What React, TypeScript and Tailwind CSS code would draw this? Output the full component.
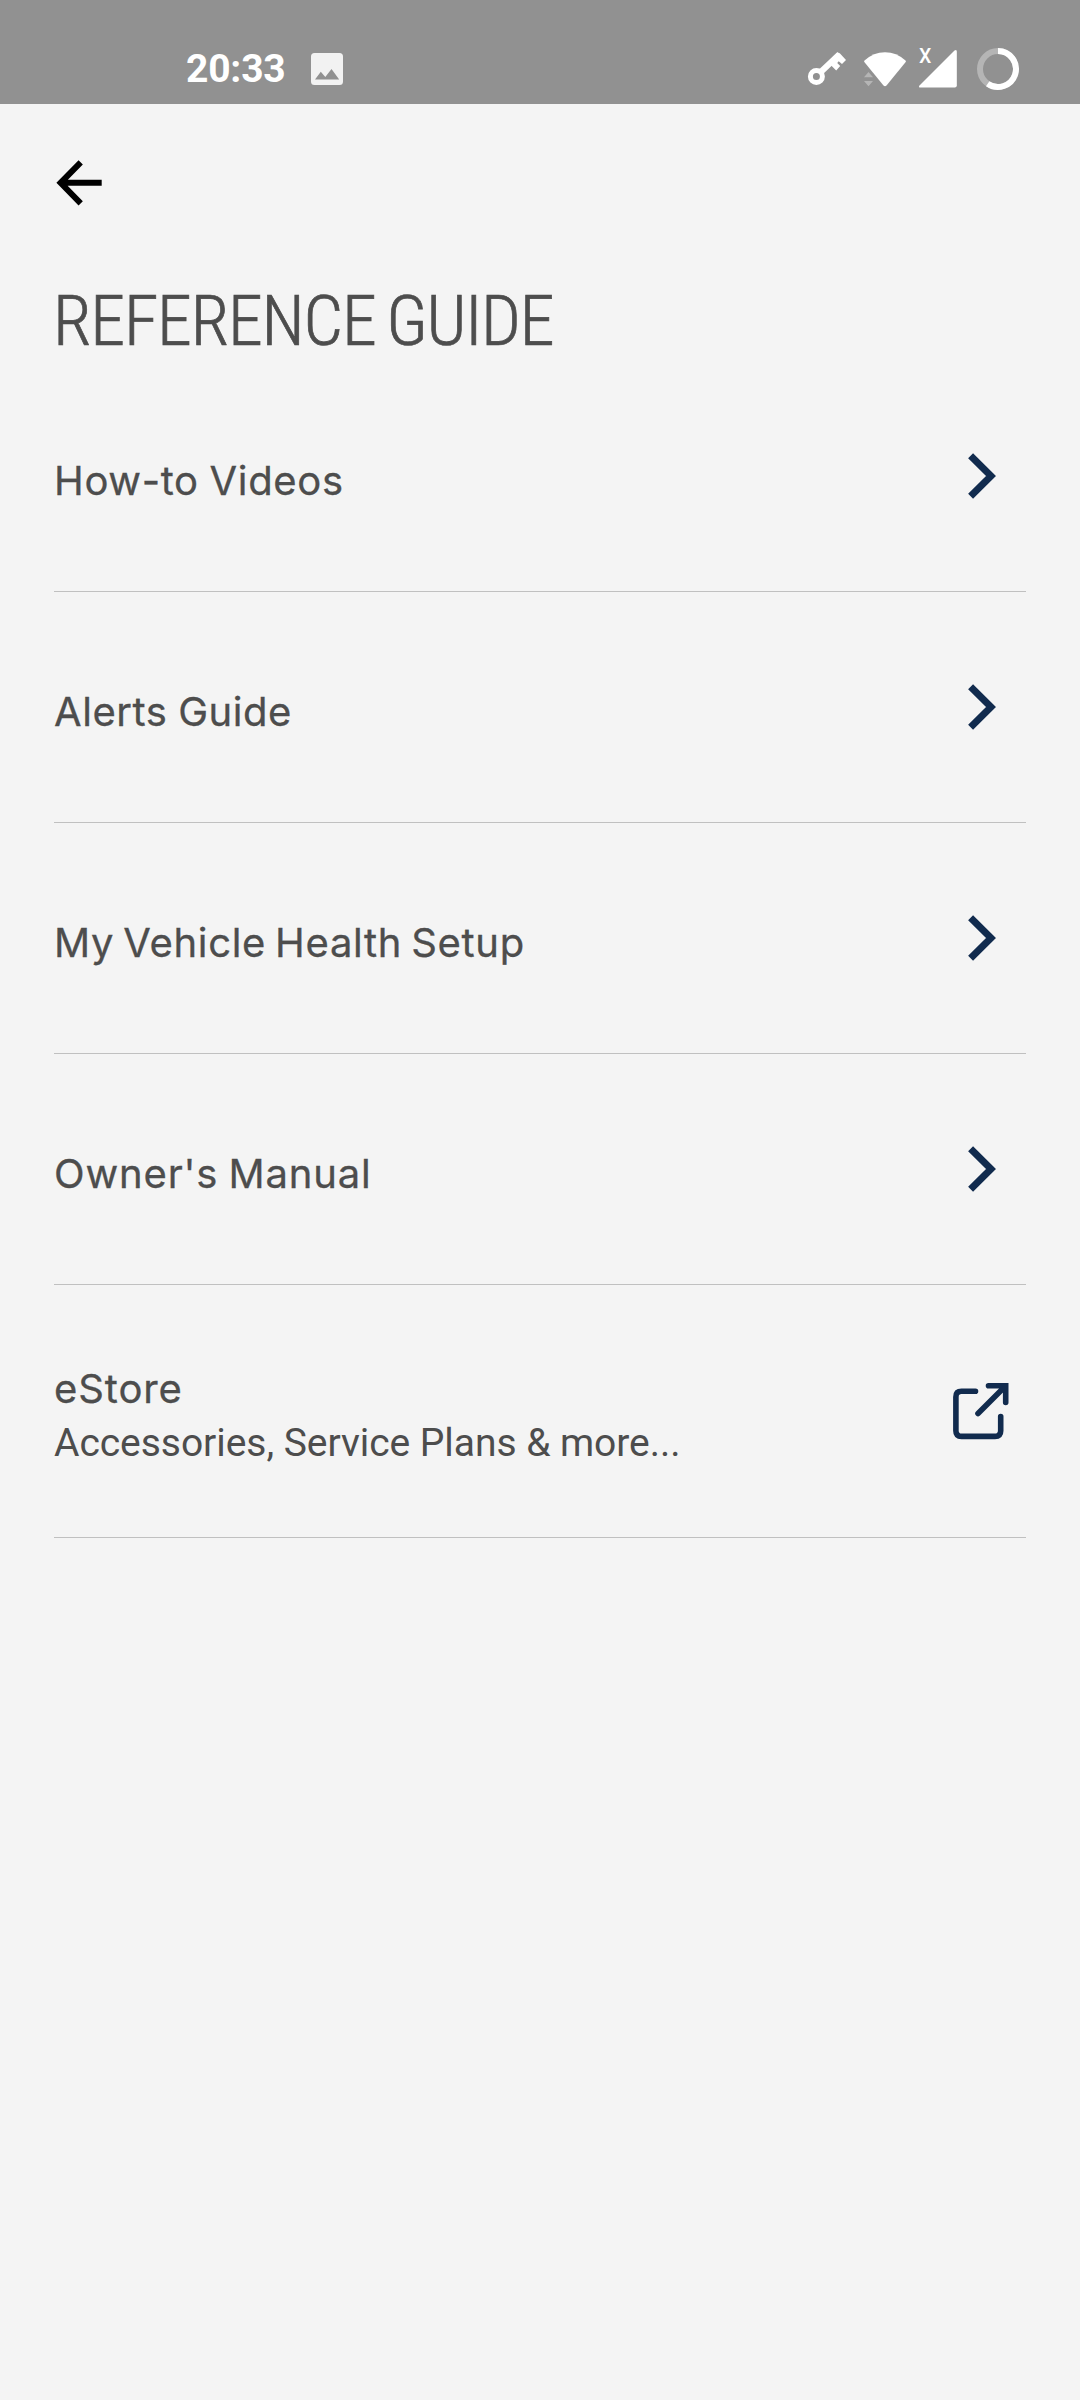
import type { ReactNode } from 'react';

function StatusBar() {
  return (
    <header className="flex h-[104px] items-start bg-[#919191] pl-[186px] pr-[60px] text-white">
      <span className="mt-[46px] w-[125px] font-['Roboto',sans-serif] text-[39px] font-bold leading-[46px] tracking-[-0.200px]">20:33</span>
      <svg className="mt-[53px]" width="32" height="32" viewBox="0 0 32 32">
        <path fillRule="evenodd" fill="#f2f2f2" d="M3.5 0h25A3.5 3.5 0 0 1 32 3.5v25a3.5 3.5 0 0 1-3.500 3.500h-25A3.5 3.5 0 0 1 0 28.500v-25A3.5 3.5 0 0 1 3.500 0ZM4 26.500h24.200L20.500 16l-6.200 8-4.500-5.200Z" />
      </svg>
      <div className="ml-auto flex pt-[47px]">
        <svg width="44" height="44" viewBox="806 47 44 44" fill="none" stroke="#fff">
          <circle cx="816.400" cy="76.400" r="6" strokeWidth="5" />
          <path d="M821 71.800 839.500 54.300" strokeWidth="6" />
          <path fill="#fff" stroke="none" d="M836.500 53.500q1.800-1.500 3.500 0l6 6.500-4 4-3.300-2.800-1.500 1.700 3 3-4 4.600-5.500-5.500Z" />
        </svg>
        <svg width="68" height="44" viewBox="850 47 68 44">
          <path fill="#fff" d="M864.500 60.500Q873.500 52.200 885 52.200T905.500 60.500q.8.800.2 1.600L886.500 85.500q-1.500 1.500-3 0L864.300 62.100q-.6-.8.2-1.600Z" />
          <path fill="#b5b5b5" d="m868.500 72 4.500 5.300h-9ZM864 81h9l-4.500 5.300Z" />
        </svg>
        <div className="relative">
          <svg width="58" height="44" viewBox="918 47 58 44">
            <path fill="#fff" d="M954.500 50.600q2.300-1.600 2.300 1V85.500q0 2-2 2H920.500q-2.500 0-1-2Z" />
          </svg>
          <span className="absolute left-px top-[-1px] font-['Roboto',sans-serif] text-[19.500px] font-medium leading-[22px]">X</span>
        </div>
        <svg width="44" height="44" viewBox="976 47 44 44" fill="none" strokeWidth="6">
          <circle cx="998" cy="69" r="18" stroke="#b5b5b5" />
          <path stroke="#fff" d="M998 51A18 18 0 1 1 987.700 83.800" />
        </svg>
      </div>
    </header>
  );
}

function Chevron() {
  return (
    <svg className="mr-[28px] mt-[90px] shrink-0" width="32" height="50" viewBox="966 451 32 50" fill="none" stroke="#112b4e" strokeWidth="7">
      <path d="M970.600 455.800 991 476l-20.400 20.200" />
    </svg>
  );
}

function ExternalLink() {
  return (
    <svg className="mr-[16px] mt-[96px] shrink-0" width="58" height="60" viewBox="952 1381 58 60" fill="none" stroke="#112b4e" strokeWidth="5.600" strokeLinecap="round">
      <path d="M975.500 1391.300H961.500q-5.600 0-5.600 5.600v33.900q0 5.600 5.600 5.600h33.500q5.700 0 5.700-5.600V1416.500" />
      <path d="M988.500 1385.700H1005.700V1402.500M1004.500 1387 978 1413.500" />
    </svg>
  );
}

function Row({ children, icon, tall }: { children: ReactNode; icon: ReactNode; tall?: boolean }) {
  return (
    <li className={tall ? 'flex h-[253px] items-start justify-between border-b border-[#c0c0c0]' : 'flex h-[231px] items-start justify-between border-b border-[#c0c0c0]'}>
      {children}
      {icon}
    </li>
  );
}

const items = [
  { label: 'How-to Videos', style: 'tracking-[0.650px] [word-spacing:-1px]' },
  { label: 'Alerts Guide', style: 'tracking-[0.550px] [word-spacing:-1px]' },
  { label: 'My Vehicle Health Setup', style: 'tracking-[0.700px] [word-spacing:-3px]' },
  { label: "Owner's Manual", style: 'tracking-[0.840px] [word-spacing:-2px]' },
];

export default function App() {
  return (
    <div className="min-h-[2400px] w-[1080px] bg-[#f4f4f4] text-[#4d4d4d]">
      <StatusBar />
      <main className="px-[54px] pt-[54px]">
        <svg width="50" height="50" viewBox="54 158 50 50" fill="none" stroke="#000" strokeWidth="6">
          <path d="M80.700 162.300 60.600 182.800 80.700 203.300M60.600 182.800H101.700" />
        </svg>
        <h1 className="-ml-px mt-[72px] h-[81px] whitespace-nowrap font-['Roboto',sans-serif] text-[70px] font-light leading-[82px] tracking-[-1.200px] [font-stretch:75%] [word-spacing:-4px] [-webkit-text-stroke:0.7px_#4d4d4d]">REFERENCE GUIDE</h1>
        <ul>
          {items.map(({ label, style }) => (
            <Row key={label} icon={<Chevron />}>
              <span className={`mt-[96px] font-['Inter',sans-serif] text-[40px] leading-[48px] [-webkit-text-stroke:0.3px_#4d4d4d] ${style}`}>{label}</span>
            </Row>
          ))}
          <Row tall icon={<ExternalLink />}>
            <div className="pt-[80px]">
              <p className="font-['Inter',sans-serif] text-[40px] leading-[48px] tracking-[0.900px] [-webkit-text-stroke:0.3px_#4d4d4d]">eStore</p>
              <p className="mt-[7px] font-['Roboto',sans-serif] text-[39px] leading-[46px] tracking-[-0.050px]">Accessories, Service Plans &amp; more...</p>
            </div>
          </Row>
        </ul>
      </main>
    </div>
  );
}
